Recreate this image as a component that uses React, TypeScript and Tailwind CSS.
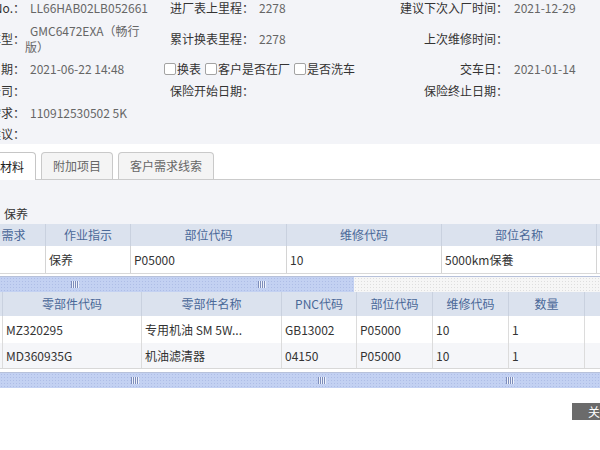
import React from 'react';

interface ScrollBarProps {
  thumb: string;
  grips: string[];
}

// clipped label column: overflow goes off the left edge, like the cropped dialog
function LeftLabel({ children }: { children: React.ReactNode }) {
  return (
    <div className="flex w-[25px] shrink-0 justify-end overflow-hidden">
      <span className="shrink-0 whitespace-nowrap">{children}</span>
    </div>
  );
}

function CheckBox({ label, className = '' }: { label: string; className?: string }) {
  return (
    <label className={`flex items-center ${className}`}>
      <span className="h-[12px] w-[12px] rounded-[2px] border border-[#a3a3a3] bg-white" />
      <span className="ml-px whitespace-nowrap">{label}</span>
    </label>
  );
}

function Grip({ className }: { className: string }) {
  return (
    <div className={`absolute top-[4px] flex ${className}`}>
      {[0, 1, 2, 3].map((i) => (
        <span key={i} className="h-[7px] w-[2px] border-l border-[#7d8dbb] bg-[#eef2fb]" />
      ))}
    </div>
  );
}

function ScrollBar({ thumb, grips }: ScrollBarProps) {
  return (
    <div className="relative h-[16px] border-t border-[#b7c1da] bg-[#f6f6f6] bg-[radial-gradient(circle,#dedede_0.7px,transparent_0.9px)] bg-[length:3px_3px]">
      <div className={`h-full bg-[#c3d1f2] bg-[radial-gradient(circle,#aebde6_0.7px,transparent_0.9px)] bg-[length:3px_3px] ${thumb}`} />
      {grips.map((g) => (
        <Grip key={g} className={g} />
      ))}
    </div>
  );
}

const TOP_COLS = ['w-[88px]', 'w-[85px]', 'w-[156px]', 'w-[155px]', 'w-[155px]', 'w-[100px]'];
const PART_COLS = ['w-[30px]', 'w-[139px]', 'w-[140px]', 'w-[75px]', 'w-[76px]', 'w-[76px]', 'w-[76px]', 'w-[80px]'];

const items = [['客户需求', '作业指示', '部位代码', '维修代码', '部位名称', '']];
const itemRows = [['', '保养', 'P05000', '10', '5000km保養', '']];

const partHead = ['', '零部件代码', '零部件名称', 'PNC代码', '部位代码', '维修代码', '数量', ''];
const partRows = [
  ['', 'MZ320295', '专用机油 SM 5W...', 'GB13002', 'P05000', '10', '1', ''],
  ['', 'MD360935G', '机油滤清器', '04150', 'P05000', '10', '1', ''],
];

export default function App() {
  return (
    <div className="h-[450px] w-[600px] overflow-hidden bg-white font-['Noto_Sans_CJK_SC',sans-serif] text-[12px] leading-[16px] text-[#333]">
      {/* Vehicle info form */}
      <div className="h-[144px] bg-[#f3f4f8]">
        <div className="flex h-[16px] items-center">
          <LeftLabel>VIN No.：</LeftLabel>
          <div className="w-[118px] shrink-0 indent-[5px] text-[#666]">LL66HAB02LB052661</div>
          <div className="ml-[21px] flex w-[216px] shrink-0 items-center">
            <span className="w-[90px] shrink-0 pl-[6px] whitespace-nowrap">进厂表上里程：</span>
            <span className="ml-[5px] text-[#666]">2278</span>
          </div>
          <span className="w-[128px] shrink-0 text-right whitespace-nowrap">建议下次入厂时间：</span>
          <span className="ml-[6px] whitespace-nowrap text-[#666]">2021-12-29</span>
        </div>

        <div className="mt-[3px] flex h-[39px] items-center">
          <LeftLabel>车型：</LeftLabel>
          <div className="w-[118px] shrink-0 indent-[5px] whitespace-nowrap text-[#666]">
            GMC6472EXA（畅行
            <br />
            版）
          </div>
          <div className="ml-[21px] flex w-[216px] shrink-0 items-center">
            <span className="w-[90px] shrink-0 pl-[6px] whitespace-nowrap">累计换表里程：</span>
            <span className="ml-[5px] text-[#666]">2278</span>
          </div>
          <span className="w-[128px] shrink-0 text-right whitespace-nowrap">上次维修时间：</span>
        </div>

        <div className="flex h-[22px] items-center">
          <LeftLabel>进厂日期：</LeftLabel>
          <div className="w-[118px] shrink-0 indent-[5px] whitespace-nowrap text-[#666]">2021-06-22 14:48</div>
          <div className="ml-[21px] flex w-[216px] shrink-0 items-center">
            <CheckBox label="换表" />
            <CheckBox label="客户是否在厂" className="ml-[4px]" />
            <CheckBox label="是否洗车" className="ml-[4px]" />
          </div>
          <span className="w-[128px] shrink-0 text-right whitespace-nowrap">交车日：</span>
          <span className="ml-[6px] whitespace-nowrap text-[#666]">2021-01-14</span>
        </div>

        <div className="flex h-[21px] items-center">
          <LeftLabel>保险公司：</LeftLabel>
          <div className="w-[118px] shrink-0" />
          <div className="ml-[21px] flex w-[216px] shrink-0 items-center">
            <span className="pl-[6px] whitespace-nowrap">保险开始日期：</span>
          </div>
          <span className="w-[128px] shrink-0 text-right whitespace-nowrap">保险终止日期：</span>
        </div>

        <div className="flex h-[23px] items-center">
          <LeftLabel>客户需求：</LeftLabel>
          <div className="w-[160px] shrink-0 indent-[5px] whitespace-nowrap text-[#666]">110912530502 5K</div>
        </div>

        <div className="flex h-[20px] items-center">
          <LeftLabel>维修建议：</LeftLabel>
        </div>
      </div>

      {/* Tabs */}
      <div className="flex h-[36px] items-end border-b border-[#cbcbcb] bg-white">
        <div className="-mb-px -ml-[36px] flex h-[28px] w-[72px] shrink-0 items-center justify-center rounded-t-[4px] border border-b-0 border-[#c6c6c6] bg-white text-[#222]">
          维修材料
        </div>
        <div className="ml-[5px] flex h-[27px] w-[72px] shrink-0 items-center justify-center rounded-t-[4px] border border-b-0 border-[#c9c9c9] bg-[#f4f4f4] text-[#666]">
          附加项目
        </div>
        <div className="ml-[5px] flex h-[27px] w-[96px] shrink-0 items-center justify-center rounded-t-[4px] border border-b-0 border-[#c9c9c9] bg-[#f4f4f4] text-[#666]">
          客户需求线索
        </div>
      </div>

      <div className="flex h-[44px] items-end bg-[#f3f4f8] pb-[2px] pl-[4px]">保养</div>

      {/* Repair items */}
      <div className="-ml-[42px]">
        {items.map((row, r) => (
          <div key={r} className="flex h-[22px] bg-[#dbe2ee] text-[#4a6898]">
            {row.map((c, i) => (
              <div key={i} className={`flex shrink-0 items-center justify-center border-r border-[#c9d1df] whitespace-nowrap ${TOP_COLS[i]}`}>
                {c}
              </div>
            ))}
          </div>
        ))}
        {itemRows.map((row, r) => (
          <div key={r} className="flex h-[28px] border-b border-[#d8d8d8] bg-white">
            {row.map((c, i) => (
              <div key={i} className={`flex shrink-0 items-center border-r border-[#d4d4d4] pl-[3px] whitespace-nowrap ${TOP_COLS[i]}`}>
                {c}
              </div>
            ))}
          </div>
        ))}
      </div>
      <div className="mt-[2px]">
        <ScrollBar thumb="w-[354px]" grips={['left-[71px]', 'left-[258px]']} />
      </div>

      {/* Parts */}
      <div className="-ml-[27px]">
        <div className="flex h-[24px] bg-[#dbe2ee] text-[#4a6898]">
          {partHead.map((c, i) => (
            <div key={i} className={`flex shrink-0 items-center justify-center border-r border-[#c9d1df] whitespace-nowrap ${PART_COLS[i]}`}>
              {c}
            </div>
          ))}
        </div>
        {partRows.map((row, r) => (
          <div
            key={r}
            className={`flex ${r === 0 ? 'h-[27px] bg-white' : 'h-[26px] border-b border-[#d8d8d8] bg-[#f5f6f9]'}`}
          >
            {row.map((c, i) => (
              <div key={i} className={`flex shrink-0 items-center border-r border-[#dcdcdc] pl-[3px] whitespace-nowrap ${PART_COLS[i]}`}>
                {c}
              </div>
            ))}
          </div>
        ))}
      </div>
      <div className="mt-[3px]">
        <ScrollBar thumb="w-full" grips={['left-[131px]', 'left-[318px]', 'left-[506px]']} />
      </div>

      {/* Footer */}
      <div className="mt-[15px] flex justify-end">
        <button className="-mr-[28px] h-[17px] bg-[#6b6b6b] px-[16px] text-[12px] leading-[17px] text-white">关闭</button>
      </div>
    </div>
  );
}
